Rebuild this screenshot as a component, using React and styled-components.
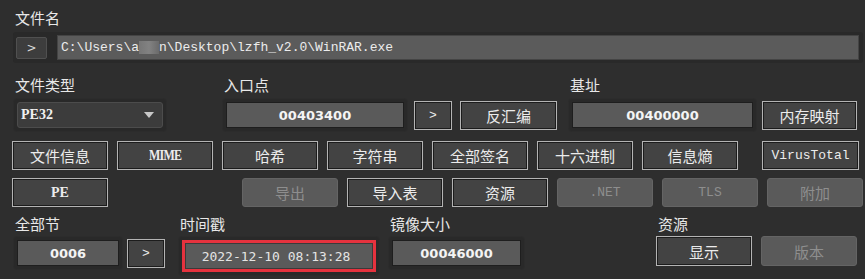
import React from "react";
import styled, { createGlobalStyle, css } from "styled-components";

const Global = createGlobalStyle`
  html, body { margin: 0; padding: 0; background: #2e2e2e; }
  * { box-sizing: border-box; }
`;

const CJK = `"Noto Sans CJK SC", "Noto Sans", sans-serif`;

const Page = styled.div`
  width: 865px;
  height: 279px;
  background: #2e2e2e;
  color: #e6e6e6;
  font-family: ${CJK};
  padding: 8px 0 0 0;
  overflow: hidden;
`;

const Label = styled.div`
  font-size: 15px;
  line-height: 20px;
  height: 20px;
  color: #e8e8e8;
  padding-left: 2px;
  white-space: nowrap;
`;

const Well = styled.div`
  display: flex;
  align-items: center;
  background: #292929;
  border: 1px solid #2c2c2c;
  border-radius: 4px;
  padding: 3px;
`;

const PathRow = styled.div`
  margin: 4px 0 0 13px;
  width: 850px;
  height: 31px;
  display: flex;
  align-items: center;
  gap: 10px;
  background: #292929;
  border-radius: 3px;
  padding: 0 4px 0 3px;
`;

const SmallBtn = styled.div`
  width: 31px;
  height: 22px;
  background: #3d3d3d;
  border: 1px solid #505050;
  border-radius: 2px;
  display: flex;
  align-items: center;
  justify-content: center;
  color: #d8d8d8;
  font-family: "DejaVu Sans", sans-serif;
  font-size: 12px;
`;

const PathField = styled.div`
  flex: 1;
  height: 25px;
  background: #5b5b5b;
  border: 1px solid #444;
  display: flex;
  align-items: center;
  padding-left: 3px;
  font-family: "Liberation Mono", monospace;
  font-size: 13px;
  color: #ececec;
  white-space: pre;
`;

const Blur = styled.span`
  display: inline-block;
  width: 20px;
  height: 13px;
  vertical-align: middle;
  background: linear-gradient(90deg, #7d7d7d, #8c8c8c 50%, #6e6e6e);
  opacity: 0.8;
`;

const Row = styled.div`
  display: flex;
  align-items: flex-start;
  margin-top: ${(p) => p.$mt || 0}px;
  padding-left: ${(p) => p.$pl || 0}px;
  gap: ${(p) => p.$gap || 0}px;
`;

const Col = styled.div`
  display: flex;
  flex-direction: column;
  width: ${(p) => (p.$w ? `${p.$w}px` : "auto")};
  margin-left: ${(p) => p.$ml || 0}px;
`;

const Inline = styled.div`
  display: flex;
  align-items: center;
  gap: ${(p) => p.$gap || 0}px;
  margin-top: ${(p) => p.$mt || 0}px;
`;

const Select = styled.div`
  width: 146px;
  height: 26px;
  background: #3c3c3c;
  border: 1px solid #4c4c4c;
  border-radius: 3px;
  display: flex;
  align-items: center;
  justify-content: space-between;
  padding: 0 8px 0 3px;
  font-family: "Liberation Serif", serif;
  font-weight: bold;
  font-size: 14px;
  color: #f0f0f0;
`;

const Caret = styled.span`
  width: 0;
  height: 0;
  border-left: 5px solid transparent;
  border-right: 5px solid transparent;
  border-top: 6px solid #c8c8c8;
`;

const Field = styled.div`
  width: ${(p) => p.$w}px;
  height: 26px;
  background: #5a5a5a;
  border: 1px solid #1e1e1e;
  display: flex;
  align-items: center;
  justify-content: center;
  font-family: "DejaVu Sans", sans-serif;
  font-weight: bold;
  font-size: 13px;
  color: #f4f4f4;
  ${(p) =>
    p.$plain &&
    css`
      font-family: "DejaVu Sans Mono", monospace;
      font-weight: normal;
      font-size: 13px;
      color: #e4e4e4;
      border-color: #3a3a3a;
      padding-right: 6px;
    `}
`;

const Highlight = styled.div`
  border: 3px solid #e5323e;
`;

const Button = styled.div`
  width: ${(p) => p.$w || 96}px;
  height: ${(p) => p.$h || 29}px;
  flex: none;
  display: flex;
  align-items: center;
  justify-content: center;
  font-size: 15px;
  white-space: nowrap;
  ${(p) =>
    p.$disabled
      ? css`
          background: #5a5a5a;
          border: 1px solid #646464;
          border-radius: 3px;
          color: #8e8e8e;
        `
      : css`
          background: #434343;
          border: 1px solid #b4b4b4;
          box-shadow: inset 0 0 0 1px #1c1c1c;
          color: #ececec;
        `}
  ${(p) =>
    p.$mono &&
    css`
      font-family: "Liberation Mono", monospace;
      font-size: 13px;
    `}
  ${(p) =>
    p.$serif &&
    css`
      font-family: "Liberation Serif", serif;
      font-weight: bold;
      font-size: 14px;
    `}
  ${(p) =>
    p.$ml &&
    css`
      margin-left: ${p.$ml}px;
    `}
`;

const MimeText = styled.span`
  font-family: "Liberation Serif", serif;
  font-weight: bold;
  font-size: 15px;
  letter-spacing: -1px;
  transform: scaleX(0.8);
`;

export default function App() {
  return (
    <Page>
      <Global />
      <Row $pl={13}>
        <Label>文件名</Label>
      </Row>
      <PathRow>
        <SmallBtn>&gt;</SmallBtn>
        <PathField>
          C:\Users\a<Blur />n\Desktop\lzfh_v2.0\WinRAR.exe
        </PathField>
      </PathRow>

      <Row $mt={12} $pl={13}>
        <Col $w={154}>
          <Label>文件类型</Label>
          <Inline $mt={3}>
            <Well>
              <Select>
                PE32
                <Caret />
              </Select>
            </Well>
          </Inline>
        </Col>
        <Col $ml={55}>
          <Label>入口点</Label>
          <Inline $mt={3} $gap={6}>
            <Well>
              <Field $w={178}>00403400</Field>
            </Well>
            <Button $w={38} $mono>&gt;</Button>
            <Button $ml={2} $w={97}>反汇编</Button>
          </Inline>
        </Col>
        <Col $ml={11}>
          <Label>基址</Label>
          <Inline $mt={3} $gap={5}>
            <Well>
              <Field $w={181}>00400000</Field>
            </Well>
            <Button $w={95}>内存映射</Button>
          </Inline>
        </Col>
      </Row>

      <Row $mt={9} $pl={12} $gap={9}>
        <Button>文件信息</Button>
        <Button><MimeText>MIME</MimeText></Button>
        <Button>哈希</Button>
        <Button>字符串</Button>
        <Button>全部签名</Button>
        <Button>十六进制</Button>
        <Button>信息熵</Button>
        <Button $ml={15} $w={97} $mono>VirusTotal</Button>
      </Row>

      <Row $mt={8} $pl={12} $gap={9}>
        <Button $serif>PE</Button>
        <Button $disabled $ml={125}>导出</Button>
        <Button>导入表</Button>
        <Button>资源</Button>
        <Button $disabled $mono>.NET</Button>
        <Button $disabled $mono>TLS</Button>
        <Button $disabled>附加</Button>
      </Row>

      <Row $mt={7} $pl={13}>
        <Col>
          <Label>全部节</Label>
          <Inline $mt={2} $gap={4}>
            <Well>
              <Field $w={102}>0006</Field>
            </Well>
            <Button $w={38} $mono>&gt;</Button>
          </Inline>
        </Col>
        <Col $ml={13}>
          <Label>时间戳</Label>
          <Inline $mt={2}>
            <Well>
              <Highlight>
                <Field $w={188} $plain>2022-12-10 08:13:28</Field>
              </Highlight>
            </Well>
          </Inline>
        </Col>
        <Col $ml={8}>
          <Label>镜像大小</Label>
          <Inline $mt={2}>
            <Well>
              <Field $w={129}>00046000</Field>
            </Well>
          </Inline>
        </Col>
        <Col $ml={131}>
          <Label>资源</Label>
          <Inline $mt={2} $gap={9}>
            <Button $h={30}>显示</Button>
            <Button $h={30} $disabled>版本</Button>
          </Inline>
        </Col>
      </Row>
    </Page>
  );
}
